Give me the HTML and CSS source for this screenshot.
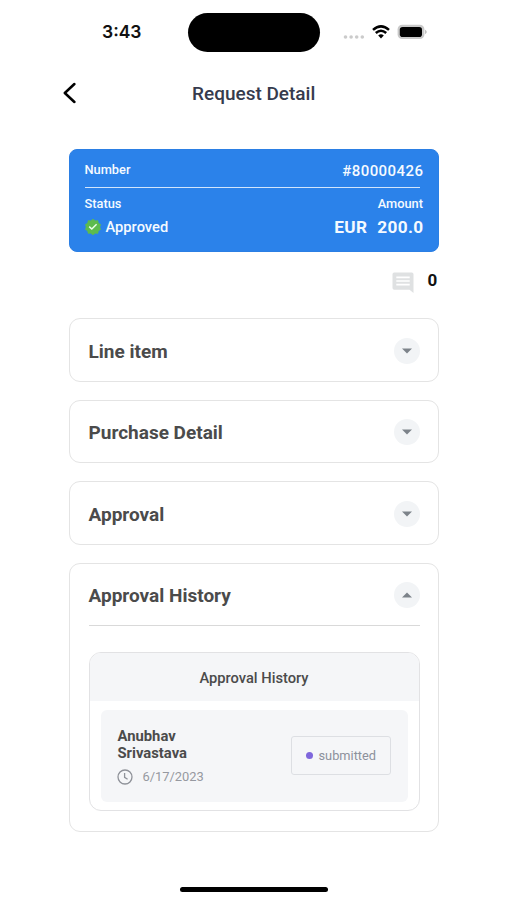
FILE: index.html
```html
<!DOCTYPE html>
<html lang="en">
<head>
<meta charset="utf-8">
<title>Request Detail</title>
<link rel="stylesheet" href="styles.css">
</head>
<body>
<div class="screen">
  <div class="statusbar">
    <span class="time">3:43</span>
    <span class="island"></span>
    <span class="indicators">
      <svg class="signal" width="22" height="6" viewBox="0 0 22 6" fill="#cbcbcb"><circle cx="2.5" cy="3" r="1.8"/><circle cx="8.1" cy="3" r="1.8"/><circle cx="13.7" cy="3" r="1.8"/><circle cx="19.3" cy="3" r="1.8"/></svg>
      <svg class="wifi" width="18" height="14" viewBox="0 0 18 14" fill="none" stroke="#000" stroke-width="2.5"><path d="M1 4.9Q9-2.1 17 4.9"/><path d="M3.8 8Q9 3.5 14.2 8"/><path d="M9 13.4L6.2 10.5Q9 8.2 11.8 10.5Z" fill="#000" stroke="none"/></svg>
      <svg class="battery" width="30" height="16" viewBox="0 0 30 16"><rect x=".6" y=".7" width="26.8" height="14.4" rx="4.6" fill="#c9c9c9"/><rect x="2.8" y="3" width="22.2" height="10" rx="2.8" fill="#000"/><path d="M28.4 5.8Q30.6 8 28.4 10.2Z" fill="#999"/></svg>
    </span>
  </div>
  <header class="nav">
    <svg class="back" width="14" height="22" viewBox="0 0 14 22" fill="none" stroke="#000" stroke-width="2.5" stroke-linecap="round" stroke-linejoin="round"><path d="M12.4 2L2.8 11L12.4 20"/></svg>
    <h1>Request Detail</h1>
  </header>
  <main>
    <section class="summary">
      <div class="row number"><span class="label">Number</span><span class="id">#80000426</span></div>
      <div class="row labels"><span class="label">Status</span><span class="label">Amount</span></div>
      <div class="row values">
        <span class="status">
          <svg width="18" height="18" viewBox="0 0 18 18"><path d="M9 .7L11.2 2.4L14 2.2L14.7 4.9L17 6.4L16.1 9L17 11.6L14.7 13.1L14 15.8L11.2 15.6L9 17.3L6.8 15.6L4 15.8L3.3 13.1L1 11.6L1.9 9L1 6.4L3.3 4.9L4 2.2L6.8 2.4Z" fill="#5dbb4e"/><path d="M5.2 8.6L7.8 11L12.6 6.3" fill="none" stroke="#eaffea" stroke-width="1.5"/></svg>
          <span class="approved">Approved</span>
        </span>
        <span class="amount"><span>EUR</span><span>200.0</span></span>
      </div>
    </section>
    <div class="comments">
      <svg width="22" height="22" viewBox="0 0 22 22"><path d="M2.2.5H19.8Q21.5.5 21.5 2.2V21L17.5 17.8H2.2Q.5 17.8.5 16.1V2.2Q.5.5 2.2.5Z" fill="#dfe1e2"/><path d="M4.3 5.3H17.7M4.3 9H17.7M4.3 12.7H17.7" stroke="#fff" stroke-width="1.7"/></svg>
      <span class="count">0</span>
    </div>
    <section class="panel"><h2>Line item</h2><span class="toggle"><svg width="10" height="6"><path d="M0 .4H10L5 5.6Z"/></svg></span></section>
    <section class="panel"><h2>Purchase Detail</h2><span class="toggle"><svg width="10" height="6"><path d="M0 .4H10L5 5.6Z"/></svg></span></section>
    <section class="panel"><h2>Approval</h2><span class="toggle"><svg width="10" height="6"><path d="M0 .4H10L5 5.6Z"/></svg></span></section>
    <section class="panel open">
      <div class="panel-head"><h2>Approval History</h2><span class="toggle"><svg width="10" height="6"><path d="M0 5.6H10L5 .4Z"/></svg></span></div>
      <div class="history">
        <h3>Approval History</h3>
        <div class="entry">
          <div class="person">
            <strong>Anubhav<br>Srivastava</strong>
            <div class="date"><svg width="16" height="16" viewBox="0 0 16 16" fill="none" stroke="#8f9299" stroke-width="1.3"><circle cx="8" cy="8" r="7"/><path d="M7.6 4V8.3L10.6 10.2"/></svg><span>6/17/2023</span></div>
          </div>
          <div class="badge"><i></i><span>submitted</span></div>
        </div>
      </div>
    </section>
  </main>
  <div class="home"></div>
</div>
</body>
</html>
```
FILE: styles.css
```css
* { box-sizing: border-box; }
body { margin: 0; background: #fff; font-family: Roboto, "Liberation Sans", sans-serif; }
h1, h2, h3 { margin: 0; }
svg { display: block; flex: none; }
span { white-space: nowrap; }
.screen { width: 507px; height: 900px; display: flex; flex-direction: column; overflow: hidden; }

.statusbar { height: 64px; display: flex; align-items: center; padding-left: 102px; }
.time { width: 86px; font: 600 17.5px/20px Inter, sans-serif; color: #111; }
.island { width: 132px; height: 39px; border-radius: 20px; background: #000; }
.indicators { display: flex; align-items: center; margin-left: 23px; }
.signal { margin-top: 9px; }
.wifi { margin-left: 7px; }
.battery { margin-left: 7px; }

.nav { height: 57px; display: flex; align-items: center; padding-left: 62px; }
.nav h1 { margin: 2px 0 0 116px; font-size: 19px; line-height: 24px; font-weight: 500; color: #363b4d; }

main { width: 370.5px; margin: 27.6px 0 0 68.5px; }
.summary { height: 103px; border-radius: 8px; background: #2b82ea; border: 1px solid #2b7fe4; color: #f5faff; padding: 0 15px; }
.row { display: flex; justify-content: space-between; align-items: center; }
.number { height: 38px; margin-right: 3px; border-bottom: 1px solid #d2e5fc; }
.number .id { margin: 5px -3.5px 0 0; font-size: 15px; font-weight: 500; letter-spacing: .45px; }
.label { font-size: 12.8px; font-weight: 500; line-height: 16px; }
.number .label { margin-top: 3px; }
.labels { height: 31px; padding-top: 1px; }
.values { height: 17px; }
.status { display: flex; align-items: center; gap: 4px; margin-left: -1px; }
.approved { font-size: 14.7px; font-weight: 500; }
.amount { display: flex; gap: 10px; margin-right: -.5px; font-size: 17.2px; font-weight: 700; letter-spacing: .35px; }

.comments { height: 66.8px; display: flex; align-items: flex-start; padding: 20.4px 0 0 323.5px; }
.comments .count { margin: -2px 0 0 13.5px; font-size: 17px; line-height: 20px; font-weight: 700; color: #111; }

.panel { height: 63.4px; margin-bottom: 18px; border: 1.5px solid #e4e4e4; border-radius: 11px; display: flex; justify-content: space-between; align-items: center; padding: 2px 18.5px 0 19px; }
.panel h2 { padding-top: 2px; font-size: 19px; line-height: 24px; font-weight: 700; color: #4b4b4b; }
.toggle { width: 26px; height: 26px; border-radius: 50%; background: #f2f4f6; display: grid; place-items: center; }
.toggle svg { fill: #7d838a; }
.panel.open { height: 269px; flex-direction: column; justify-content: flex-start; align-items: stretch; padding-top: 0; }
.panel-head { height: 62.4px; display: flex; align-items: center; justify-content: space-between; border-bottom: 1.5px solid #d9d9d9; padding-top: 2px; }
.history { height: 159px; margin-top: 26px; border: 1.5px solid #e2e2e4; border-radius: 12px; overflow: hidden; }
.history h3 { height: 48px; background: #f5f6f8; text-align: center; font-size: 14.7px; line-height: 51px; font-weight: 500; color: #4b4b4b; }
.entry { height: 92px; margin: 9px 11px 0; background: #f5f6f8; border-radius: 6px; display: flex; justify-content: space-between; padding: 0 17px; }
.person { padding-top: 18px; }
.person strong { display: block; font-size: 14.8px; line-height: 17px; font-weight: 700; color: #4b4b4b; }
.date { display: flex; align-items: center; margin-top: 7px; font-size: 12.9px; line-height: 16px; color: #9699a0; }
.date svg { margin-left: -1px; }
.date span { margin-left: 10px; }
.badge { width: 99.5px; height: 39px; margin-top: 26px; border: 1px solid #dddfe3; border-radius: 3px; display: flex; align-items: center; padding: 1px 0 0 13.5px; font-size: 12.8px; color: #8d919c; }
.badge i { width: 7px; height: 7px; border-radius: 50%; background: #7f67dc; margin-right: 6px; }

.home { width: 148px; height: 5px; border-radius: 3px; background: #000; margin: auto 0 8.5px 180px; }
```
